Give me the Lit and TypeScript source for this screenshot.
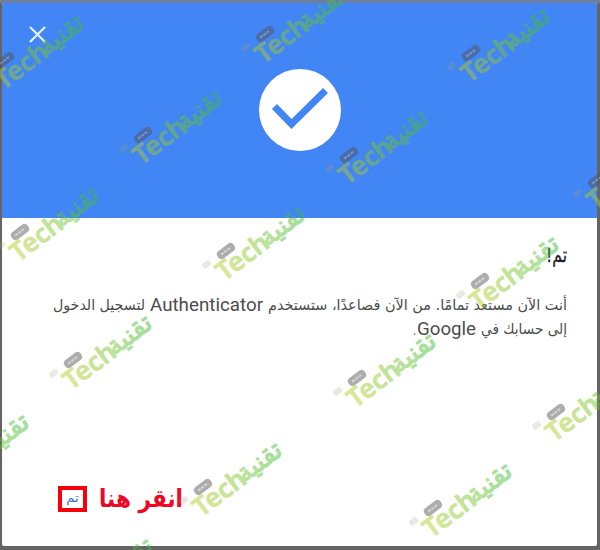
import { LitElement, html, svg, css } from "lit";
import { customElement } from "lit/decorators.js";

const MARKS: [number, number][] = [
  [5, 60], [143, 135], [265, 34], [471, 53], [349, 155], [597, 180],
  [20, 232], [226, 251], [480, 281], [73, 360], [357, 378],
  [556, 412], [433, 508], [203, 487], [-50, 459], [74, 583],
];

const line = (cls: string, w: number, text: string, latin = false) => html`
  <svg class=${"seg " + cls} width=${w} height="24" style=${`width:${w}px`}>
    <text x=${latin ? 0 : w} y=${latin ? 18.5 : 17.5} direction=${latin ? "ltr" : "rtl"} textLength=${w} lengthAdjust="spacingAndGlyphs">${text}</text>
  </svg>`;

@customElement("app-root")
export class AppRoot extends LitElement {
  static styles = css`
    :host { display: block; width: 600px; height: 550px; }
    .frame { position: relative; box-sizing: border-box; width: 600px; height: 550px; overflow: hidden;
      background: linear-gradient(#6c7f9f 3px, #656365 3px); padding: 3px 3px 4px 2px; }
    .dialog { height: 543px; background: #fff; display: flex; flex-direction: column; border-radius: 2px; overflow: hidden; }
    .hero { height: 215px; background: #4285f4; display: grid; grid-template-columns: 70px 1fr 70px; flex: none; }
    .close { margin: 23px 0 0 27px; }
    .done { justify-self: center; margin-top: 65.5px; }
    .body { direction: rtl; padding: 22px 30px 0 0; flex: 1; }
    .row { display: flex; height: 24px; }
    .title { padding-top: 4px; margin-bottom: 24px; }
    .seg { display: block; overflow: visible; flex: none; fill: #4c4c4e; }
    .ar { font-family: "DejaVu Sans", sans-serif; font-size: 15px; }
    .la { font-family: Roboto, sans-serif; font-size: 18.5px; margin: 0 5px; }
    .dot { font-family: Roboto, sans-serif; font-size: 17px; margin-right: -4px; }
    .head { font-family: "DejaVu Sans", sans-serif; font-size: 20px; fill: #1c1c1c; stroke: #1c1c1c; stroke-width: .3px; }
    .actions { direction: ltr; display: flex; align-items: center; height: 38px; padding-left: 56px; margin-bottom: 28px; }
    .ok { box-sizing: border-box; width: 29px; height: 26px; border: 4px solid #f5000c; display: grid; place-items: center;
      background: #fff; padding: 0 0 3px; font: 13px "DejaVu Sans", sans-serif; color: #4070d0; line-height: 14px; }
    .hint { display: block; overflow: visible; margin-left: 12px; fill: #ed0825;
      font: bold 25px "DejaVu Sans", sans-serif; }
    .marks { position: absolute; inset: 0; pointer-events: none; }
    .mark { opacity: .48; }
    .latin { font: 600 26px "Noto Sans", sans-serif; }
    .arabic { font: 26px "DejaVu Sans", sans-serif; stroke-width: 1.2; }
  `;

  render() {
    return html`<div class="frame">
      <div class="dialog">
        <div class="hero">
          <svg class="close" width="17" height="17" viewBox="0 0 17 17"><path d="M1 1 16 16M16 1 1 16" stroke="#e8f4ff" stroke-width="2.1" /></svg>
          <svg class="done" width="82" height="82" viewBox="0 0 82 82">
            <circle cx="41" cy="41" r="41" fill="#fff" />
            <path d="M15.500 37.500 32.500 55 66.500 21.500" fill="none" stroke="#4285f4" stroke-width="7" />
          </svg>
        </div>
        <div class="body">
          <div class="row title">${line("head", 21, "تم!")}</div>
          <div class="row">
            ${line("ar", 299, "أنت الآن مستعد تمامًا. من الآن فصاعدًا، ستستخدم")}
            ${line("la", 113, "Authenticator", true)}
            ${line("ar", 92, "لتسجيل الدخول")}
          </div>
          <div class="row">
            ${line("ar", 86, "إلى حسابك في")}
            ${line("la", 59, "Google", true)}
            ${line("dot", 3, ".", true)}
          </div>
        </div>
        <div class="actions">
          <button class="ok">تم</button>
          <svg class="hint" width="84" height="30"><text x="84" y="23" direction="rtl" textLength="84" lengthAdjust="spacingAndGlyphs">انقر هنا</text></svg>
        </div>
      </div>
      <svg class="marks" width="600" height="550" aria-hidden="true">
        <defs><linearGradient id="leaf" gradientUnits="userSpaceOnUse" x1="-15" x2="90" y1="0" y2="0">
          <stop offset="0" stop-color="#b4cc28" /><stop offset=".45" stop-color="#78c62c" /><stop offset="1" stop-color="#38b83c" />
        </linearGradient></defs>
        ${MARKS.map(([x, y]) => svg`<g class="mark" transform="translate(${x} ${y}) rotate(-37)">
          <rect x="-10" y="-4.500" width="20" height="9" rx="4" fill="#555" />
          <path d="M-6 0H6" stroke="#aaa" stroke-width="2" stroke-dasharray="3 1" />
          <rect x="-28" y="-4" width="9" height="6" rx="2" fill="#9aa982" opacity=".5" />
          <g fill="url(#leaf)" stroke="url(#leaf)" stroke-width=".7">
            <text class="latin" x="-20" y="23.500" textLength="59" lengthAdjust="spacingAndGlyphs">Tech</text>
            <text class="arabic" x="85" y="22" direction="rtl" textLength="50" lengthAdjust="spacingAndGlyphs">تقنية</text>
          </g>
        </g>`)}
      </svg>
    </div>`;
  }
}
